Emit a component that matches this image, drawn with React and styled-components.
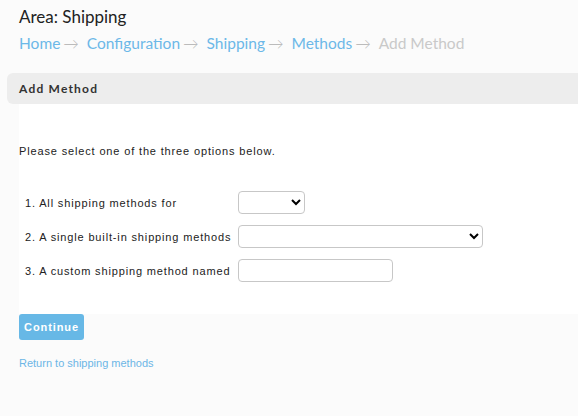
import React from "react";
import styled, { createGlobalStyle } from "styled-components";

const Global = createGlobalStyle`
  html, body { margin: 0; padding: 0; background: #fbfbfb; }
  body { font-family: Arial, "Liberation Sans", sans-serif; }
`;

const Page = styled.div`
  width: 578px;
  height: 416px;
  overflow: hidden;
  background: #fbfbfb;
`;

const Title = styled.h1`
  margin: 0;
  padding: 6px 19px 0;
  font-family: Lato, sans-serif;
  font-weight: 400;
  font-size: 17px;
  line-height: 22px;
  color: #222;
`;

const Crumbs = styled.nav`
  display: flex;
  align-items: center;
  padding: 4px 19px 0;
  height: 22px;
  font-family: Lato, sans-serif;
  font-size: 15.5px;
  line-height: 22px;
`;

const Crumb = styled.a`
  color: ${(p) => (p.$current ? "#c9c9c9" : "#6cb8e8")};
  text-decoration: none;
`;

const Arrow = styled.span`
  color: #b0b0b0;
  font-weight: 300;
  margin: 0 8px 0 3px;
`;

const SectionHeader = styled.div`
  margin: 19px 0 0 7px;
  height: 31px;
  display: flex;
  align-items: center;
  padding: 0 12px;
  background: #ededed;
  border-radius: 6px 0 0 6px;
  font-family: Lato, sans-serif;
  font-weight: 700;
  font-size: 12px;
  letter-spacing: 1.2px;
  color: #333;
`;

const Content = styled.div`
  margin-left: 19px;
  background: #fff;
  height: 210px;
  padding-top: 41px;
  box-sizing: border-box;
`;

const Intro = styled.p`
  margin: 0;
  font-size: 11px;
  letter-spacing: 0.85px;
  line-height: 13px;
  color: #222;
`;

const Options = styled.div`
  display: grid;
  grid-template-columns: max-content max-content;
  column-gap: 7px;
  row-gap: 11px;
  align-items: center;
  margin: 33px 0 0 6px;
`;

const Label = styled.label`
  font-size: 11px;
  letter-spacing: 0.85px;
  color: #222;
`;

const Select = styled.select`
  width: ${(p) => p.$w}px;
  height: 23px;
  border: 1px solid #c7c7c7;
  border-radius: 4px;
  background: #fff;
  font-size: 11px;
  box-sizing: border-box;
`;

const TextInput = styled.input`
  width: 155px;
  height: 23px;
  border: 1px solid #c7c7c7;
  border-radius: 4px;
  background: #fff;
  box-sizing: border-box;
  padding: 0 4px;
`;

const Button = styled.button`
  display: block;
  margin-left: 19px;
  height: 26px;
  width: 65px;
  border: none;
  border-radius: 3px;
  background: #67b8e6;
  color: #fff;
  font-family: Arial, "Liberation Sans", sans-serif;
  font-weight: 700;
  font-size: 11px;
  letter-spacing: 0.9px;
  padding: 0;
`;

const BackLink = styled.a`
  display: block;
  margin: 17px 0 0 19px;
  font-size: 11px;
  color: #6cb6e6;
  text-decoration: none;
`;

export default function App() {
  return (
    <Page>
      <Global />
      <Title>Area: Shipping</Title>
      <Crumbs>
        <Crumb href="#">Home</Crumb>
        <Arrow>→</Arrow>
        <Crumb href="#">Configuration</Crumb>
        <Arrow>→</Arrow>
        <Crumb href="#">Shipping</Crumb>
        <Arrow>→</Arrow>
        <Crumb href="#">Methods</Crumb>
        <Arrow>→</Arrow>
        <Crumb $current>Add Method</Crumb>
      </Crumbs>
      <SectionHeader>Add Method</SectionHeader>
      <Content>
        <Intro>Please select one of the three options below.</Intro>
        <Options>
          <Label>1. All shipping methods for</Label>
          <div>
            <Select $w={67}>
              <option></option>
            </Select>
          </div>
          <Label>2. A single built-in shipping methods</Label>
          <div>
            <Select $w={245}>
              <option></option>
            </Select>
          </div>
          <Label>3. A custom shipping method named</Label>
          <div>
            <TextInput type="text" />
          </div>
        </Options>
      </Content>
      <Button>Continue</Button>
      <BackLink href="#">Return to shipping methods</BackLink>
    </Page>
  );
}
